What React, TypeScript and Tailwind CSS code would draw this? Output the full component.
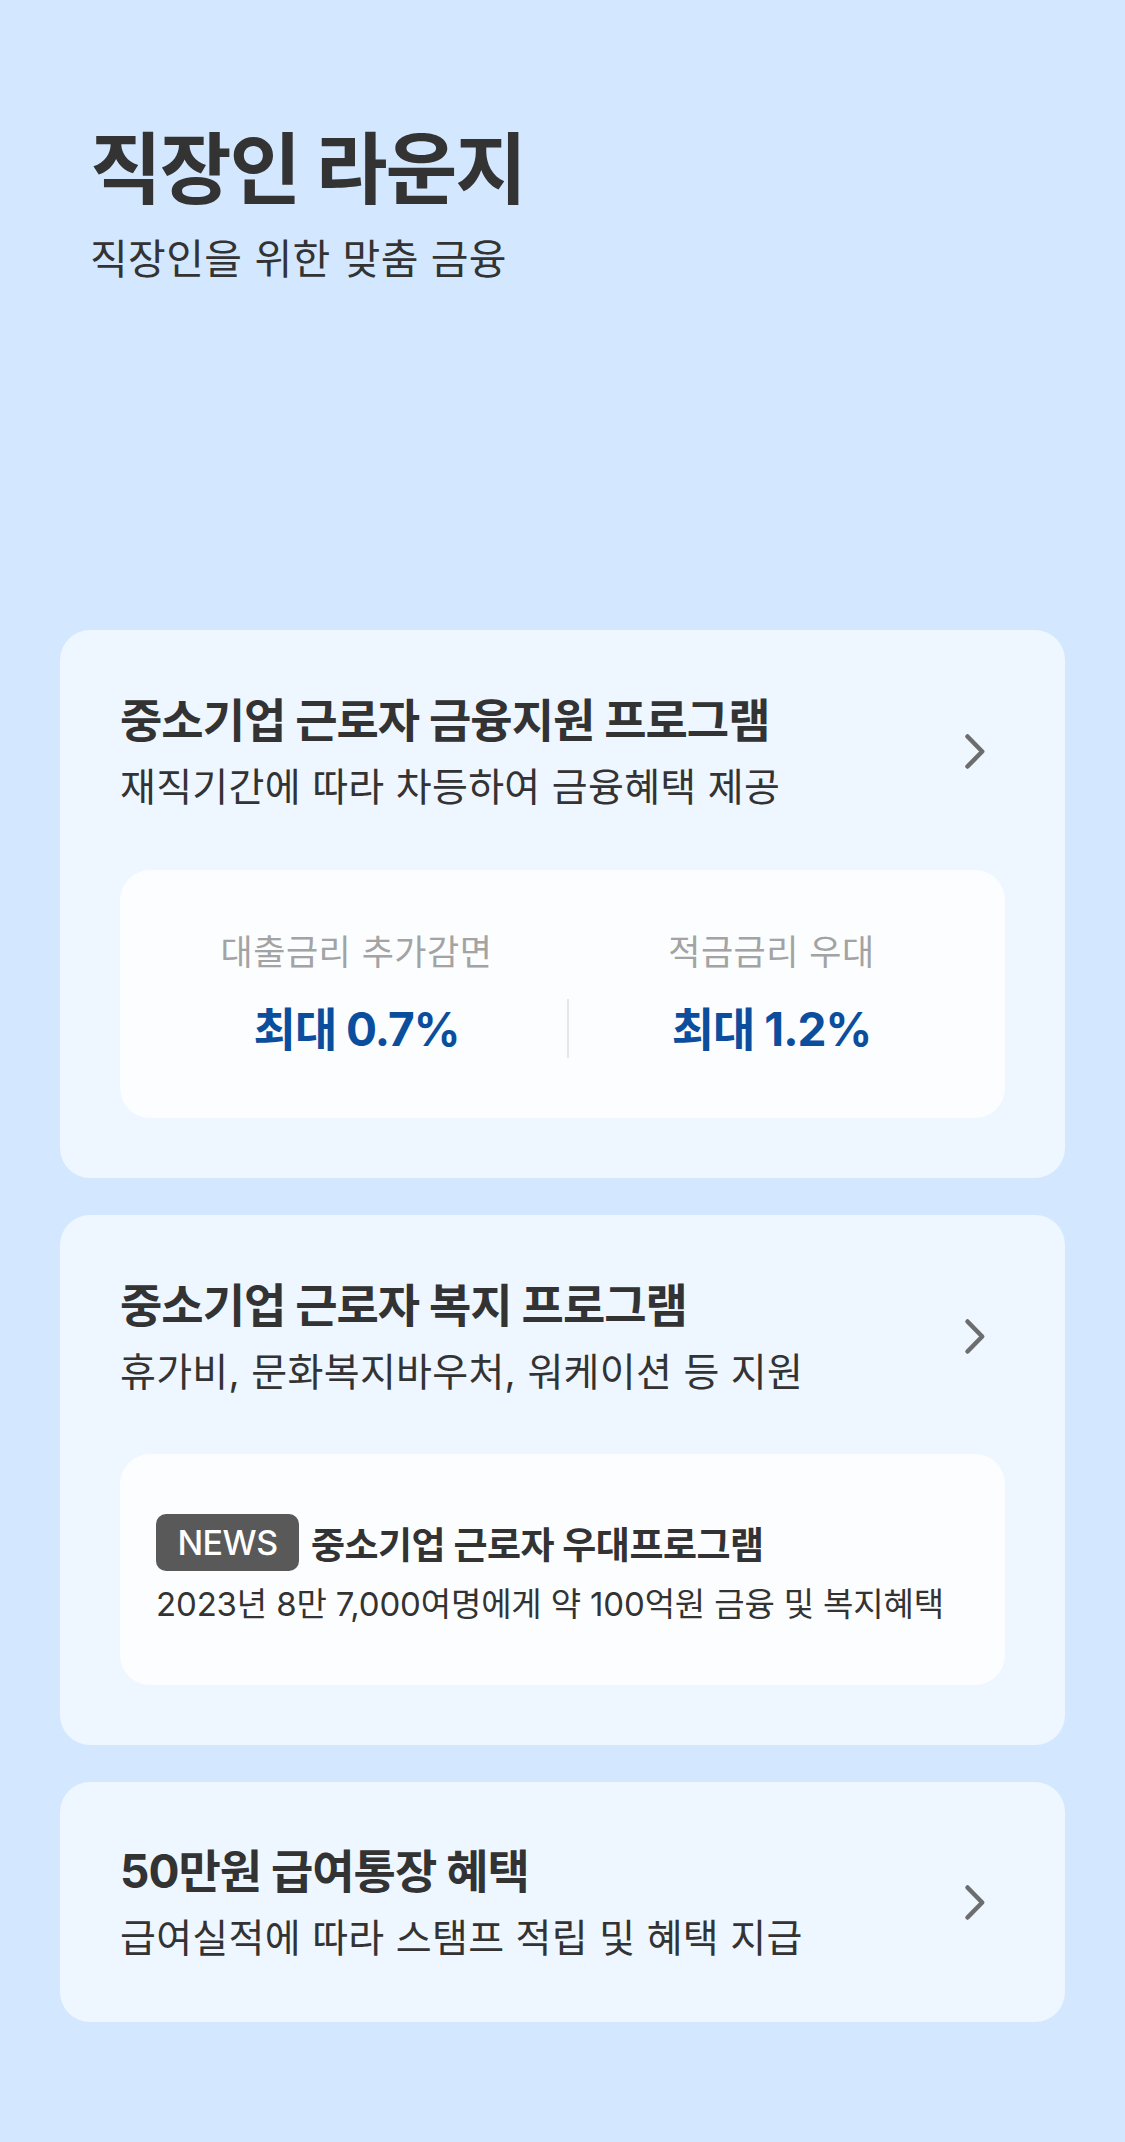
import React from "react";

function Chevron() {
  return (
    <svg width="20" height="35" viewBox="0 0 20 35" fill="none" className="overflow-visible shrink-0">
      <path d="M2.5 2.5 L17.2 17.5 L2.5 32.5" stroke="#6d6d6d" strokeWidth="4.5" strokeLinecap="round" strokeLinejoin="round" />
    </svg>
  );
}

function CardHeader({ title, sub }: { title: string; sub: string }) {
  return (
    <div className="flex items-center justify-between pr-[20px]">
      <div className="flex flex-col">
        <div className="text-[46px] leading-[46px] font-bold tracking-[-1px] text-[#333333]">{title}</div>
        <div className="mt-[24px] text-[39px] leading-[39px] tracking-[0.3px] text-[#333333]">{sub}</div>
      </div>
      <Chevron />
    </div>
  );
}

export default function App() {
  return (
    <div className="min-h-[2142px] w-full bg-[#d3e7fe] font-['Inter','Noto_Sans_CJK_KR',sans-serif]">
      <header className="pl-[90px] pt-[131px]">
        <h1 className="text-[78px] leading-[78px] font-bold tracking-[-2px] text-[#333333]">직장인 라운지</h1>
        <p className="mt-[30px] text-[41px] leading-[41px] tracking-[0.4px] text-[#333333]">직장인을 위한 맞춤 금융</p>
      </header>

      <main className="mt-[350px] flex flex-col gap-[37px] px-[60px] pb-[120px]">
        {/* Card 1 */}
        <section className="rounded-[30px] bg-[#eef6ff] px-[60px] pt-[67px] pb-[60px]">
          <CardHeader title="중소기업 근로자 금융지원 프로그램" sub="재직기간에 따라 차등하여 금융혜택 제공" />
          <div className="mt-[64px] h-[248px] rounded-[30px] bg-[#fbfdff] pl-[26px] pt-[66px]">
            <div className="grid grid-cols-[421px_2px_405px] grid-rows-[32px_59px] gap-y-[31px]">
              <div className="text-center text-[35px] leading-[32px] tracking-[0.5px] text-[#a3a3a3]">대출금리 추가감면</div>
              <div />
              <div className="text-center text-[35px] leading-[32px] tracking-[0.5px] text-[#a3a3a3]">적금금리 우대</div>
              <div className="flex items-center justify-center text-[46px] leading-[46px] font-bold tracking-[-1px] text-[#0b4e9d]">최대 0.7%</div>
              <div className="h-[59px] w-[2px] bg-[#e4e6ea]" />
              <div className="flex items-center justify-center text-[46px] leading-[46px] font-bold tracking-[-1px] text-[#0b4e9d]">최대 1.2%</div>
            </div>
          </div>
        </section>

        {/* Card 2 */}
        <section className="rounded-[30px] bg-[#eef6ff] px-[60px] pt-[67px] pb-[60px]">
          <CardHeader title="중소기업 근로자 복지 프로그램" sub="휴가비, 문화복지바우처, 워케이션 등 지원" />
          <div className="mt-[63px] rounded-[30px] bg-[#fbfdff] pl-[36px] pt-[60px] pb-[65px]">
            <div className="flex h-[57px] items-center">
              <span className="flex h-[57px] w-[143px] items-center justify-center rounded-[10px] bg-[#595959] text-[34px] leading-[34px] font-medium tracking-[-0.5px] text-white">
                NEWS
              </span>
              <span className="ml-[12px] mt-[6px] text-[37px] leading-[37px] font-bold tracking-[-0.5px] text-[#333333]">
                중소기업 근로자 우대프로그램
              </span>
            </div>
            <div className="mt-[17px] text-[33px] leading-[32px] tracking-[-0.15px] text-[#333333]">
              2023년 8만 7,000여명에게 약 100억원 금융 및 복지혜택
            </div>
          </div>
        </section>

        {/* Card 3 */}
        <section className="rounded-[30px] bg-[#eef6ff] px-[60px] pt-[66px] pb-[65px]">
          <CardHeader title="50만원 급여통장 혜택" sub="급여실적에 따라 스탬프 적립 및 혜택 지급" />
        </section>
      </main>
    </div>
  );
}
